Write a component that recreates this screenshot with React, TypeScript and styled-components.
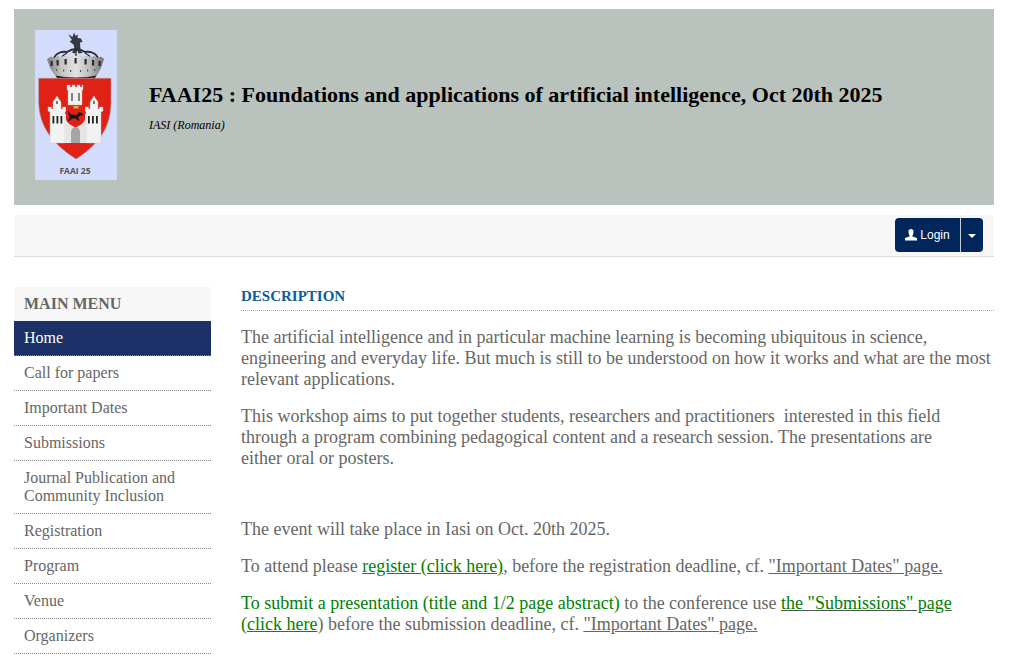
import React from "react";
import styled, { createGlobalStyle } from "styled-components";

const Global = createGlobalStyle`
  html, body { margin: 0; padding: 0; background: #fff; }
  body { font-family: "Liberation Serif", "Times New Roman", serif; color: #555; overflow: hidden; }
`;

const Page = styled.div`
  width: 980px;
  padding: 9px 22px 0 14px;
`;

const Header = styled.header`
  height: 196px;
  background: #b9c2bd;
  display: flex;
  align-items: flex-start;
  padding: 21px 0 0 21px;
  box-sizing: border-box;
`;

const Logo = styled.svg`
  width: 82px;
  height: 150px;
  flex: none;
  display: block;
`;

const HeaderText = styled.div`
  margin: 52px 0 0 32px;
  color: #000;
`;

const Title = styled.h1`
  margin: 0;
  font-size: 22px;
  line-height: 25px;
  font-weight: bold;
`;

const Subtitle = styled.div`
  margin-top: 11px;
  font-size: 12px;
  line-height: 14px;
  font-style: italic;
`;

const Bar = styled.div`
  height: 42px;
  box-sizing: border-box;
  margin-top: 10px;
  background: #f7f7f7;
  border-bottom: 1px solid #dcdcdc;
  display: flex;
  justify-content: flex-end;
  align-items: flex-start;
  padding: 3px 11px 0 0;
`;

const Split = styled.div`
  display: flex;
  height: 34px;
  border-radius: 4px;
  overflow: hidden;
  background: #00265c;
  color: #fff;
  font-family: "Liberation Sans", Arial, sans-serif;
  font-size: 12px;
`;

const LoginButton = styled.div`
  width: 65px;
  display: flex;
  align-items: center;
  justify-content: center;
  gap: 3px;
  border-right: 1px solid #c8ccd0;
`;

const Caret = styled.div`
  width: 22px;
  display: flex;
  align-items: center;
  justify-content: center;

  &::after {
    content: "";
    margin-top: 2px;
    border-top: 4px solid #fff;
    border-left: 4px solid transparent;
    border-right: 4px solid transparent;
  }
`;

const Columns = styled.div`
  display: flex;
  gap: 30px;
  margin-top: 30px;
`;

const Side = styled.nav`
  width: 197px;
  flex: none;
`;

const MenuTitle = styled.div`
  height: 34px;
  box-sizing: border-box;
  background: #f7f7f7;
  padding: 8px 10px 0;
  font-size: 16px;
  line-height: 18px;
  font-weight: bold;
  color: #666;
`;

const MenuItem = styled.a<{ $active?: boolean }>`
  display: block;
  padding: 8px 10px;
  font-size: 16px;
  line-height: 18px;
  color: ${(p) => (p.$active ? "#fff" : "#666")};
  background: ${(p) => (p.$active ? "#1c3168" : "transparent")};
  border-bottom: 1px dotted #888;
`;

const Main = styled.main`
  flex: 1;
  min-width: 0;
`;

const Heading = styled.h2`
  margin: 0;
  height: 23px;
  font-size: 15px;
  line-height: 18px;
  font-weight: bold;
  color: #0b5c9e;
  border-bottom: 1px dotted #aaa;
`;

const Para = styled.p<{ $gapTop?: number }>`
  margin: ${(p) => p.$gapTop ?? 16}px 0 0;
  font-size: 18px;
  line-height: 21px;
  color: #666;
`;

const Green = styled.span`
  color: #008000;
`;

const GreenLink = styled.a`
  color: #008000;
  text-decoration: underline;
  text-decoration-color: #555;
`;

const GreyLink = styled.a`
  color: #666;
  text-decoration: underline;
`;

const items = ["Call for papers", "Important Dates", "Submissions"];
const items2 = ["Registration", "Program", "Venue", "Organizers"];

function Crest() {
  return (
    <Logo viewBox="0 0 82 150">
      <defs>
        <linearGradient id="crown" x1="0" x2="1" y1="0" y2="0">
          <stop offset="0" stopColor="#7d7d7d" />
          <stop offset="0.25" stopColor="#c4c4c4" />
          <stop offset="0.5" stopColor="#e2e2e2" />
          <stop offset="0.75" stopColor="#bcbcbc" />
          <stop offset="1" stopColor="#6f6f6f" />
        </linearGradient>
      </defs>
      <rect width="82" height="150" fill="#d4dcfd" />
      {/* griffin */}
      <path d="M33 4l4.500 3 1.500-4.500 1.500 3.500 2.500-1.500-.5 3.500 3.500.5 1.500 3.500-2.500.5.500 8 2 2.500-4 .5-1-3-3 3-2.500-1 2.500-4-1-4-4-3 2.500-1.500z" fill="#35393f" />
      {/* arches over the crown */}
      <path d="M19 28c2-5 8-7 13-6 3-2 6-3 9-3s6 1 9 3c5-1 11 1 13 6" fill="none" stroke="#2b2f34" strokeWidth="1.800" />
      <path d="M27 27c1-2 3-3 5-4M55 27c-1-2-3-3-5-4M41 19v8" fill="none" stroke="#2b2f34" strokeWidth="1.300" />
      {/* crown */}
      <path d="M12 29L16 26.500 19 28 23 26 26 27 30 25.500 33 26.500 37 25.500 41 26 45 25.500 49 26.500 52 25.500 56 27 59 26 63 28 66 26.500 69 29 66 38 61 47C51 49.500 31 49.500 21 47L15 38z" fill="url(#crown)" />
      <g fill="#2b2b2b">
        <rect x="15.500" y="31" width="2.200" height="5" />
        <rect x="21.500" y="30" width="2.200" height="5.500" />
        <rect x="29.500" y="29" width="2.200" height="5.500" />
        <rect x="39.500" y="28" width="2.200" height="5.500" />
        <rect x="49.500" y="29" width="2.200" height="5.500" />
        <rect x="57" y="30" width="2.200" height="5.500" />
        <rect x="63.500" y="31" width="2.200" height="5" />
      </g>
      <g fill="#555">
        <rect x="21" y="39" width="1.200" height="2" />
        <rect x="28" y="39.500" width="1.200" height="2" />
        <rect x="35" y="40" width="1.200" height="2" />
        <rect x="45" y="40" width="1.200" height="2" />
        <rect x="52" y="39.500" width="1.200" height="2" />
        <rect x="59" y="39" width="1.200" height="2" />
      </g>
      <path d="M21 45.500c10 2.500 30 2.500 40 0l-1 3H22z" fill="#222" />
      {/* shield */}
      <path d="M3.700 48.300H76V72C76 95 66 113 41 129 16 113 4 95 3.700 72z" fill="#e02115" stroke="#a89c9c" strokeWidth="0.600" />
      {/* top tower */}
      <path d="M32 55h3v2h2v-2h3v2h2v-2h3v2h2v-2h1v5h-1v15H33V60h-1z" fill="#f1f1f1" stroke="#c4c4c4" strokeWidth="0.400" />
      <rect x="36" y="63" width="2" height="8" fill="#858585" />
      <rect x="43" y="63" width="2" height="8" fill="#858585" />
      {/* side towers */}
      <path d="M13 77h3.500v2h1.500v-7l4-6 4 6v7h1.500v-2H31v4l-1 1v31H15V82l-2-1z" fill="#f2f2f2" stroke="#c4c4c4" strokeWidth="0.400" />
      <path d="M50 77h3.500v2H55v-7l4-6 4 6v7h1.500v-2H68v4l-2 1v31H51V82l-1-1z" fill="#f2f2f2" stroke="#c4c4c4" strokeWidth="0.400" />
      <rect x="21" y="71" width="2" height="3" fill="#777" />
      <rect x="58" y="71" width="2" height="3" fill="#777" />
      <path d="M30 84h21v29H30z" fill="#e6e6e6" />
      <path d="M31 77h19v12c0 3-4 6-9.500 8.500C35 95 31 92 31 89z" fill="#e02115" />
      <g fill="#222">
        <rect x="17.500" y="86" width="1.800" height="7.500" />
        <rect x="21.500" y="86" width="1.800" height="7.500" />
        <rect x="25.500" y="86" width="1.800" height="7.500" />
        <rect x="53" y="86" width="1.800" height="7.500" />
        <rect x="57" y="86" width="1.800" height="7.500" />
        <rect x="61" y="86" width="1.800" height="7.500" />
      </g>
      <rect x="38.500" y="76" width="5" height="2.500" fill="#e2b13a" />
      <path d="M33 81l3 3.500 6 .5 2-3 2.500 1 2 2.500-3.500 0-2 2 1.500 3h-1.500l-2-2-4 0-2.500 2.500h-1.500l1.500-4-1-3z" fill="#16121a" />
      <path d="M36 113V102c0-3 2-5 4.500-5s4.500 2 4.500 5v11z" fill="#a6a6a6" />
      <text x="40" y="144" textAnchor="middle" fontFamily="'Open Sans', sans-serif" fontWeight="700" fontSize="8.500" fill="#555">FAAI 25</text>
    </Logo>
  );
}

export default function App() {
  return (
    <Page>
      <Global />
      <Header>
        <Crest />
        <HeaderText>
          <Title>FAAI25 : Foundations and applications of artificial intelligence, Oct 20th 2025</Title>
          <Subtitle>IASI (Romania)</Subtitle>
        </HeaderText>
      </Header>
      <Bar>
        <Split>
          <LoginButton>
            <svg width="12" height="12" viewBox="0 0 12 12" fill="#fff">
              <path d="M3.500 2.500a2.500 2.500 0 0 1 5 0C8.500 5 7.800 6 7.500 6.500v1l4.500 1.500V11.500H0V9l4.500-1.500v-1C4.200 6 3.500 5 3.500 2.500z" />
            </svg>
            Login
          </LoginButton>
          <Caret />
        </Split>
      </Bar>
      <Columns>
        <Side>
          <MenuTitle>MAIN MENU</MenuTitle>
          <MenuItem $active>Home</MenuItem>
          {items.map((t) => (
            <MenuItem key={t}>{t}</MenuItem>
          ))}
          <MenuItem>
            Journal Publication and
            <br />
            Community Inclusion
          </MenuItem>
          {items2.map((t) => (
            <MenuItem key={t}>{t}</MenuItem>
          ))}
        </Side>
        <Main>
          <Heading>DESCRIPTION</Heading>
          <Para>
            The artificial intelligence and in particular machine learning is becoming ubiquitous in science, engineering and everyday life. But much is still to be understood on how it works and what are the most relevant applications.
          </Para>
          <Para>
            This workshop aims to put together students, researchers and practitioners&nbsp; interested in this field
            <br />
            through a program combining pedagogical content and a research session. The presentations are
            <br />
            either oral or posters.
          </Para>
          <Para $gapTop={50}>The event will take place in Iasi on Oct. 20th 2025.</Para>
          <Para>
            To attend please <GreenLink>register (click here)</GreenLink>, before the registration deadline, cf. <GreyLink>"Important Dates" page.</GreyLink>
          </Para>
          <Para>
            <Green>To submit a presentation (title and 1/2 page abstract)</Green> to the conference use <GreenLink>the "Submissions" page</GreenLink>
            <br />
            <Green>(</Green>
            <GreenLink>click here</GreenLink>) before the submission deadline, cf. <GreyLink>"Important Dates" page.</GreyLink>
          </Para>
        </Main>
      </Columns>
    </Page>
  );
}
